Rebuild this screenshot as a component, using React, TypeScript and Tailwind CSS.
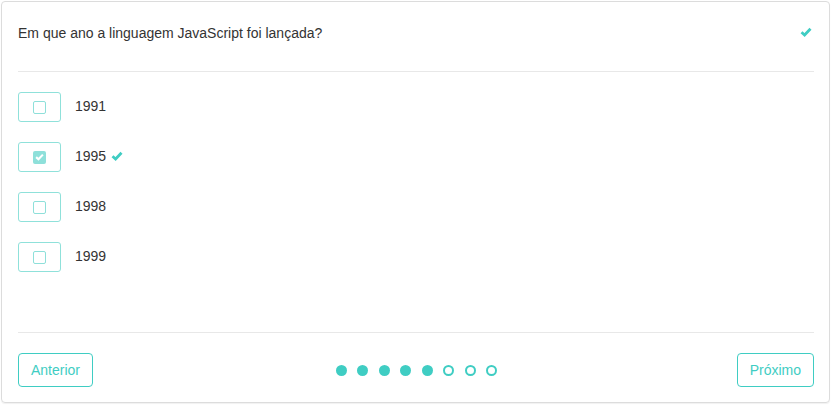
function Check({ className }: { className?: string }) {
    return (
        <svg viewBox="0 0 12 10" className={className} fill="none">
            <path d="M1.5 5.2 L4.6 8 L10.5 1.8" stroke="currentColor" strokeWidth="2.8" strokeLinecap="butt" strokeLinejoin="miter" />
        </svg>
    );
}

function Option({ label, checked }: { label: string; checked?: boolean }) {
    return (
        <div className="flex items-center h-[30px]">
            <div className="w-[43px] h-[30px] border border-[#8fe1da] rounded-[3px] flex items-center justify-center">
                {checked ? (
                    <div className="w-[13px] h-[13px] rounded-[2px] bg-[#8ee0da] flex items-center justify-center">
                        <Check className="w-[9px] h-[8px] text-white" />
                    </div>
                ) : (
                    <div className="w-[13px] h-[13px] rounded-[2px] border-[1.5px] border-[#8ee0da]" />
                )}
            </div>
            <span className="ml-[14px] text-[14px] text-[#333] mb-[2px]">{label}</span>
            {checked && <Check className="ml-[5px] w-[12px] h-[10px] text-[#3fcdc3] mb-[3px]" />}
        </div>
    );
}

export default function App() {
    const dots = [true, true, true, true, true, false, false, false];
    return (
        <div className="w-[834px] h-[407px] bg-white pt-px pl-px" style={{ fontFamily: '"Liberation Sans", Arial, sans-serif' }}>
            <div className="w-[829px] h-[402px] border border-[#dcdcdc] rounded-[4px] shadow-[0_1px_1px_rgba(0,0,0,0.06)] flex flex-col pl-[16px] pr-[15px]">
                <div className="h-[70px] flex items-center justify-between border-b border-[#e8e8e8] shrink-0 pb-[6px]">
                    <span className="text-[14px] text-[#333]">Em que ano a linguagem JavaScript foi lançada?</span>
                    <Check className="w-[12px] h-[10px] text-[#3fcdc3] mr-[2px] mb-[3px]" />
                </div>
                <div className="flex-1 pt-[20px] flex flex-col gap-[20px]">
                    <Option label="1991" />
                    <Option label="1995" checked />
                    <Option label="1998" />
                    <Option label="1999" />
                </div>
                <div className="border-t border-[#e8e8e8] pt-[20px] pb-[15px] flex items-center justify-between shrink-0">
                    <button className="h-[34px] px-[12px] border border-[#3fcdc3] rounded-[4px] text-[14px] text-[#3fcdc3] bg-white">Anterior</button>
                    <div className="flex items-center gap-[10.5px] ml-[3px]">
                        {dots.map((f, i) =>
                            f ? (
                                <div key={i} className="w-[11px] h-[11px] rounded-full bg-[#3fcdc3]" />
                            ) : (
                                <div key={i} className="w-[11px] h-[11px] rounded-full border-2 border-[#3fcdc3]" />
                            )
                        )}
                    </div>
                    <button className="h-[34px] px-[12px] border border-[#3fcdc3] rounded-[4px] text-[14px] text-[#3fcdc3] bg-white">Próximo</button>
                </div>
            </div>
        </div>
    );
}
